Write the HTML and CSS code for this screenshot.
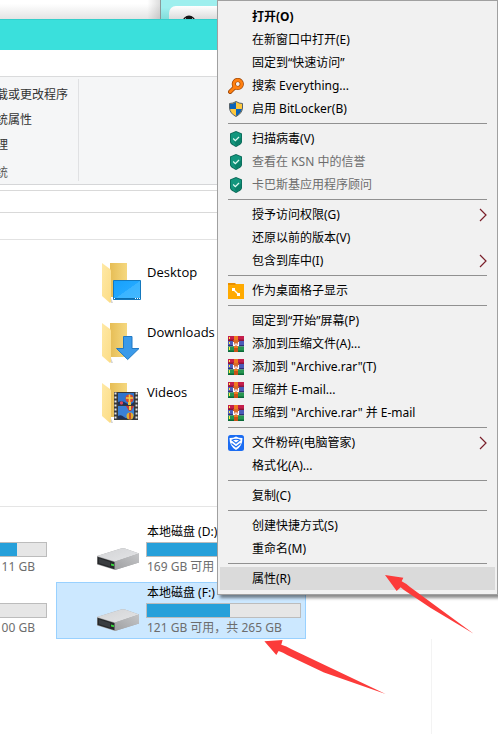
FILE: index.html
```html
<!DOCTYPE html>
<html lang="zh-CN">
<head>
<meta charset="utf-8">
<title>此电脑</title>
<link rel="stylesheet" href="styles.css">
</head>
<body>
<svg class="defs" aria-hidden="true">
  <defs>
    <linearGradient id="flap" x1="0" y1="0" x2="1" y2="1"><stop offset="0" stop-color="#ffe9a6"/><stop offset="1" stop-color="#fbdc86"/></linearGradient>
    <linearGradient id="back" x1="0" y1="0" x2="1" y2="0"><stop offset="0" stop-color="#e6bd55"/><stop offset="1" stop-color="#f5d880"/></linearGradient>
    <linearGradient id="screen" x1="0" y1="0" x2="1" y2="1"><stop offset="0" stop-color="#16a0fb"/><stop offset=".5" stop-color="#22a8ff"/><stop offset=".51" stop-color="#3ab4ff"/><stop offset="1" stop-color="#45b9ff"/></linearGradient>
    <linearGradient id="drivetop" x1="0" y1="0" x2="1" y2="1"><stop offset="0" stop-color="#d2d3d5"/><stop offset="1" stop-color="#e4e5e7"/></linearGradient>
    <linearGradient id="driveside" x1="0" y1="1" x2="1" y2="0"><stop offset="0" stop-color="#9fa0a2"/><stop offset="1" stop-color="#c4c5c7"/></linearGradient>
    <symbol id="folder" viewBox="0 0 40 41">
      <path d="M8 0H25V34H8z" fill="url(#back)"/>
      <path d="M0 0L8 6Q9 7 9 8V39L8 40L0 33z" fill="url(#flap)"/>
      <path d="M9 35V40L11 40z" fill="#d5d5d5"/>
    </symbol>
    <symbol id="drive" viewBox="0 0 43 23">
      <path d="M0 8L24 .5Q26 0 28 .5L42 5.500V14.500L18 22L0 16.500z" fill="#a4a5a7"/>
      <path d="M0 8L24 .5Q26 0 28 .5L42 5.500L18 13.500z" fill="url(#drivetop)"/>
      <path d="M18 13.500L42 5.500V14.500L18 22z" fill="url(#driveside)"/>
      <path d="M.5 8.800L17.500 14V21.300L.5 16z" fill="#27292b"/>
      <path d="M2 10.500L13 14V18.500L2 15z" fill="#3a3d40"/>
      <path d="M14 15.500L17 16.300V18.300L14 17.500z" fill="#36d63b"/>
    </symbol>
    <symbol id="kasp" viewBox="0 0 16 16">
      <path d="M8 0L14 2.500V10.500C14 13 11 14.500 8 16C5 14.500 2 13 2 10.500V2.500z" fill="#0b6656"/>
      <path d="M8 1L13.200 3V10.500C13 12.500 10.500 13.700 8 15C5.500 13.700 3 12.500 2.800 10.500V3z" fill="#13967d"/>
      <path d="M13.200 6V10.500C13 12.500 10.500 13.700 8 15L6 10L8 10.500z" fill="#0b8069"/>
      <path d="M5.200 7.500L7.300 9.600L11 6" fill="none" stroke="#e3f8f1" stroke-width="1.200"/>
    </symbol>
    <symbol id="rar" viewBox="0 0 16 16">
      <path d="M0 0H16V5H0z" fill="#c51e4b"/><path d="M0 3.500H16V5H0z" fill="#8b153d"/>
      <path d="M0 5H16V10H0z" fill="#4c5bb8"/><path d="M0 9H16V10.500H0z" fill="#302f79"/>
      <path d="M0 10.500H16V16H0z" fill="#269650"/><path d="M0 14.500H16V16H0z" fill="#096837"/>
      <path d="M1 1H2V3H1zM1 6H2V8H1zM1 11H2V14H1z" fill="#ffe94a"/>
      <path d="M6 0H10V16H6z" fill="#ef7b20"/><path d="M6 12H10V16H6z" fill="#c85018"/>
      <path d="M5 4H11V10H5z" fill="#c04a2c"/>
      <path d="M6 4H10V7H6z" fill="#d96b28"/>
      <path d="M5.500 6V9.500H7V8H9V9.500H10.500V6" fill="none" stroke="#fff" stroke-width="1.100"/>
    </symbol>
    <symbol id="chev" viewBox="0 0 8 14"><path d="M1 1L7 7L1 13" fill="none" stroke="#7a1f2a" stroke-width="1.200"/></symbol>
  </defs>
</svg>

<div class="desktop">
  <div class="behind">
    <div class="behind-page"></div>
    <div class="behind-app"><div class="behind-card">
      <svg class="logo" viewBox="0 0 14 14"><circle cx="7" cy="7" r="6.500" fill="#151515"/><path d="M2.500 4.500L4 3.500M10 3.500L11.500 4.500" stroke="#ddd"/></svg>
    </div></div>
  </div>
  <header class="titlebar"></header>
  <div class="tabs"></div>
  <section class="ribbon">
    <div class="group">
      <a href="#">载或更改程序</a>
      <a href="#">统属性</a>
      <a href="#">理</a>
      <span class="caption">统</span>
    </div>
  </section>
  <div class="gap"></div>
  <div class="address"></div>
  <div class="spacer"></div>
  <main class="content">
    <section class="folders">
      <a href="#" class="folder">
        <svg class="folder-icon" viewBox="0 0 40 41"><use href="#folder" width="40" height="41"/><path d="M11.500 17.500H38.500V36.500H11.500z" fill="url(#screen)" stroke="#1478bd"/><path d="M12 35.500H38" stroke="#0b6eaf"/><path d="M12 35.500H13M33 35.500H34M35 35.500H36M37 35.500H38" stroke="#fff"/></svg>
        <span>Desktop</span>
      </a>
      <a href="#" class="folder">
        <svg class="folder-icon" viewBox="0 0 40 41"><use href="#folder" width="40" height="41"/><path d="M21.500 13.500H30V25.500H37L25.700 36.500L14.500 25.500H21.500z" fill="#3b9ae9" stroke="#2179c4"/></svg>
        <span>Downloads</span>
      </a>
      <a href="#" class="folder">
        <svg class="folder-icon" viewBox="0 0 40 41"><use href="#folder" width="40" height="41"/>
          <path d="M12 9H36V37H12z" fill="#37393b"/><path d="M13.500 9.500V37M34.500 9.500V37" stroke="#e6e6e6" stroke-width="2" stroke-dasharray="2 2"/>
          <path d="M16 10H32V22H16z" fill="#2f73cc"/><path d="M16 23H32V36H16z" fill="#3a80d6"/>
          <path d="M16 19Q20 17 24 20T32 19V22H16zM16 33Q19 31 22 34T32 33V36H16z" fill="#1f3158"/>
          <circle cx="27.500" cy="15.500" r="4" fill="#d64a31"/><path d="M27.500 11.500V19.500M24 15H31" stroke="#f3d044" stroke-width="1.600"/><path d="M26 19H29V22H26z" fill="#ebc241"/>
          <path d="M24 23H32L29 28H27z" fill="#c53d3a"/><path d="M27 23H29V27H27z" fill="#f2d13f"/><circle cx="28" cy="33" r="3.500" fill="#e0ae32"/><path d="M28 30V36" stroke="#c8332f" stroke-width="1.500"/><circle cx="19.500" cy="20" r="1.700" fill="#d94a5a"/>
        </svg>
        <span>Videos</span>
      </a>
    </section>
    <section class="drives">
      <div class="drive">
        <span class="name"></span><div class="bar"><div class="fill" style="width:81%"></div></div><span class="free end">11 GB</span>
      </div>
      <div class="drive">
        <svg class="drive-icon"><use href="#drive"/></svg>
        <span class="name">本地磁盘 (D:)</span><div class="bar"><div class="fill" style="width:63%"></div></div><span class="free">169 GB 可用</span>
      </div>
      <div class="drive">
        <span class="name"></span><div class="bar"></div><span class="free end">00 GB</span>
      </div>
      <div class="drive selected">
        <svg class="drive-icon"><use href="#drive"/></svg>
        <span class="name">本地磁盘 (F:)</span><div class="bar"><div class="fill" style="width:54%"></div></div><span class="free">121 GB 可用，共 265 GB</span>
      </div>
    </section>
    <div class="pane"></div>
  </main>

  <div class="menu" role="menu">
    <button class="strong" role="menuitem"><i></i>打开(O)</button>
    <button role="menuitem"><i></i>在新窗口中打开(E)</button>
    <button role="menuitem"><i></i>固定到“快速访问”</button>
    <button role="menuitem"><svg viewBox="0 0 16 16"><path d="M6.500 9.500L2.200 13.800" stroke="#9c4508" stroke-width="4.400" stroke-linecap="round"/><circle cx="9.800" cy="6" r="4" fill="none" stroke="#9c4508" stroke-width="4.200"/><path d="M6.500 9.500L2.200 13.800" stroke="#ff8010" stroke-width="2.800" stroke-linecap="round"/><circle cx="9.800" cy="6" r="4" fill="none" stroke="#ff8010" stroke-width="2.800"/></svg>搜索 Everything...</button>
    <button role="menuitem"><svg viewBox="0 0 16 16"><path d="M8 .5Q11 2.500 14.500 2.500V7Q14 12.500 8 15.500Q2 12.500 1.500 7V2.500Q5 2.500 8 .5z" fill="#ffc83d"/><path d="M8 1Q5 3 2 3V8H8zM8 8H14Q13 12.500 8 15z" fill="#0c63b8"/><path d="M8 .5Q11 2.500 14.500 2.500V7Q14 12.500 8 15.500Q2 12.500 1.500 7V2.500Q5 2.500 8 .5z" fill="none" stroke="#54616d"/></svg>启用 BitLocker(B)</button>
    <hr>
    <button role="menuitem"><svg><use href="#kasp"/></svg>扫描病毒(V)</button>
    <button role="menuitem" disabled><svg><use href="#kasp"/></svg>查看在 KSN 中的信誉</button>
    <button role="menuitem" disabled><svg><use href="#kasp"/></svg>卡巴斯基应用程序顾问</button>
    <hr>
    <button role="menuitem"><i></i>授予访问权限(G)<svg class="more"><use href="#chev"/></svg></button>
    <button role="menuitem"><i></i>还原以前的版本(V)</button>
    <button role="menuitem"><i></i>包含到库中(I)<svg class="more"><use href="#chev"/></svg></button>
    <hr>
    <button role="menuitem"><svg viewBox="0 0 16 16"><path d="M0 0H7L8 1V4H0z" fill="#e98f00"/><path d="M0 2H7L8 1H16V16H0z" fill="#ffaa00"/><path d="M4 5H7V8H4zM9 10H12V13H9z" fill="#fff"/><path d="M6 7L10 11" stroke="#fff" stroke-width="1.200"/></svg>作为桌面格子显示</button>
    <hr>
    <button role="menuitem"><i></i>固定到“开始”屏幕(P)</button>
    <button role="menuitem"><svg><use href="#rar"/></svg>添加到压缩文件(A)...</button>
    <button role="menuitem"><svg><use href="#rar"/></svg>添加到 "Archive.rar"(T)</button>
    <button role="menuitem"><svg><use href="#rar"/></svg>压缩并 E-mail...</button>
    <button role="menuitem"><svg><use href="#rar"/></svg>压缩到 "Archive.rar" 并 E-mail</button>
    <hr>
    <button role="menuitem"><svg viewBox="0 0 16 16"><rect width="16" height="16" rx="2.500" fill="#1b6cf2"/><path d="M8 1.500Q10.500 3 14.500 3Q14.500 11.500 8 15Q1.500 11.500 1.500 3Q5.500 3 8 1.500z" fill="#fff"/><path d="M3 5Q8 2.500 13 5L8 9z" fill="#1b6cf2"/><path d="M5 5.300Q8 4 11 5.300L8 7.500z" fill="#fff"/><path d="M3.500 8.500L8 12L12.500 8.500" fill="none" stroke="#1b6cf2" stroke-width="1.100"/></svg>文件粉碎(电脑管家)<svg class="more"><use href="#chev"/></svg></button>
    <button role="menuitem"><i></i>格式化(A)...</button>
    <hr>
    <button role="menuitem"><i></i>复制(C)</button>
    <hr>
    <button role="menuitem"><i></i>创建快捷方式(S)</button>
    <button role="menuitem"><i></i>重命名(M)</button>
    <hr>
    <button class="active" role="menuitem"><i></i>属性(R)</button>
  </div>

  <svg class="arrow arrow-menu" viewBox="0 0 267 177"><path d="M0 0L55 8L50 19Q62 25 74 35L266 176L136 98L58 46Q50 40 47 37L35 48z" fill="#fc3b3a"/></svg>
  <svg class="arrow arrow-drive" viewBox="0 0 366 163"><path d="M0 4L55 0L51 14Q66 18 82 28L366 163L180 98L70 46Q56 37 43 33L36 45z" fill="#fc3b3a"/></svg>
</div>
</body>
</html>
```
FILE: styles.css
```css
* { box-sizing: border-box; }

body {
  margin: 0;
  background: #fff;
  color: #000;
  font: 12px/16px "Noto Sans", "Noto Sans CJK SC", sans-serif;
}

a { color: inherit; text-decoration: none; }
svg { display: block; flex: none; }
.defs { position: absolute; width: 0; height: 0; }

.desktop {
  position: relative;
  min-height: 100vh;
  display: flex;
  flex-direction: column;
  overflow: hidden;
}

/* windows behind the explorer window */
.behind { display: flex; height: 19px; }
.behind-page {
  width: 161px;
  border-right: 1px solid #8b9999;
  background: linear-gradient(90deg, transparent 92%, #0002), linear-gradient(#fff 20%, #e4e4e4);
}
.behind-app { flex: 1; padding: 6px 0 0 8px; background: linear-gradient(#9eefee 40%, #83dcda); }
.behind-card {
  height: 13px;
  padding: 9px 0 0 13px;
  border-top-left-radius: 7px;
  background: linear-gradient(#fff, #dcdcdc);
  overflow: hidden;
}
.logo { width: 14px; height: 14px; }

/* explorer window chrome */
.titlebar { height: 31px; background: #3ae0dc; border-top: 1px solid #34cfcb; }
.tabs { height: 27px; border-bottom: 1px solid #dadbdc; }
.ribbon { height: 108px; padding: 2px 0 3px; background: #f5f6f7; border-bottom: 1px solid #d5d6d8; }
.group {
  display: flex;
  flex-direction: column;
  gap: 9px;
  width: 79px;
  height: 102px;
  padding-top: 8px;
  border-right: 1px solid #e0e1e3;
  text-indent: -4px;
  white-space: nowrap;
  color: #333;
}
.group .caption { margin-top: 3px; color: #5a5a5a; }
.gap { height: 6px; border-bottom: 1px solid #d9d9d9; }
.address { height: 22px; border-bottom: 1px solid #d9d9d9; }
.spacer { height: 27px; border-bottom: 1px solid #e2e2e2; }

.content { flex: 1; display: flex; flex-direction: column; }
.folders {
  display: grid;
  gap: 19px;
  padding: 23px 0 82px 102px;
  border-bottom: 1px solid #e5e5e5;
}
.folder { display: flex; gap: 5px; }
.folder span { padding-top: 1px; font-family: "Open Sans", sans-serif; font-size: 13px; }
.folder-icon { width: 40px; height: 41px; }

.drives {
  display: grid;
  grid-template-columns: 250px 250px;
  gap: 4px;
  padding-top: 14px;
  margin-left: -198px;
}
.drive {
  display: grid;
  grid-template-columns: 43px 155px;
  column-gap: 6px;
  justify-content: end;
  padding: 1px 4px 1px 0;
  border: 1px solid transparent;
}
.drive > * { grid-column: 2; }
.drive .drive-icon { grid-column: 1; grid-row: 1 / 4; align-self: end; width: 43px; height: 23px; margin-bottom: 5px; }
.name { height: 19px; padding-left: 1px; line-height: 18px; white-space: nowrap; }
.bar { height: 15px; border: 1px solid #bcbcbc; background: #e6e6e6; }
.fill { height: 100%; background: #26a0da; }
.free { height: 19px; padding-left: 1px; line-height: 19px; color: #6d6d6d; white-space: nowrap; }
.free.end { padding-right: 12px; text-align: right; }
.selected { background: #cce8ff; border-color: #99d1ff; }
.pane { flex: 1; width: 432px; border-right: 1px solid #f3f3f3; }

/* context menu */
.menu {
  position: absolute;
  top: 0;
  left: 217px;
  right: 0;
  padding: 4px 2px;
  border: 1px solid #a0a0a0;
  background: #f1f1f1;
  box-shadow: 3px 3px 3px #0007;
}
.menu button {
  display: flex;
  align-items: center;
  gap: 8px;
  width: 100%;
  height: 23px;
  padding: 0 8px;
  border: 0;
  background: none;
  color: #000;
  font: inherit;
  text-align: left;
  white-space: nowrap;
}
.menu button:disabled { color: #6d6d6d; }
.menu .strong { font-weight: 700; }
.menu .active { background: #dadada; }
.menu i, .menu svg { width: 16px; height: 16px; flex: none; }
.menu .more { width: 8px; height: 14px; margin-left: auto; }
.menu hr { height: 1px; margin: 3px 8px; border: 0; background: #919191; }

/* hand-drawn pointers */
.arrow { position: absolute; pointer-events: none; }
.arrow-menu { left: 385px; top: 575px; width: 89px; height: 59px; }
.arrow-drive { left: 264px; top: 640px; width: 122px; height: 54px; }
```
